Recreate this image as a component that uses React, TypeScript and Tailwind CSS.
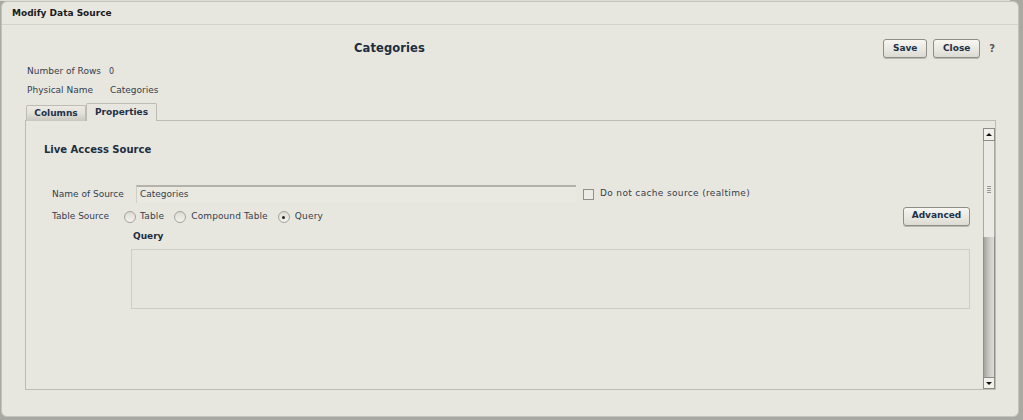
import React from "react";

const font = { fontFamily: '"DejaVu Sans", Verdana, sans-serif' };

function Btn({ children, w }: { children: React.ReactNode; w: string }) {
  return (
    <div
      className={`${w} h-[19px] flex items-center justify-center rounded-[3px] border border-[#8e8d86] bg-gradient-to-b from-[#f7f6f1] to-[#dcdbd3] shadow-[0_1px_0_#b9b8b0] text-[9px] font-bold text-[#1d3148]`}
    >
      {children}
    </div>
  );
}

function Radio({ checked }: { checked?: boolean }) {
  return (
    <div className="w-[12px] h-[12px] rounded-full border border-[#a3a29b] bg-gradient-to-b from-[#dcdbd3] to-[#f3f2ed] flex items-center justify-center">
      {checked && <div className="w-[3px] h-[3px] rounded-full bg-[#222]" />}
    </div>
  );
}

export default function App() {
  return (
    <div className="w-[1023px] h-[420px] bg-[#a9a9a4] overflow-hidden" style={font}>
      <div className="h-[1px] bg-[#dcdcd5] w-[1010px]" />
      <div className="ml-[1px] w-[1018px] h-[416px] bg-[#e8e7df] border border-[#c5c4bc] rounded-[6px] flex flex-col">
        {/* header */}
        <div className="h-[23px] border-b border-[#d3d2ca] flex items-center pl-[10px] pt-[2px] text-[9px] font-bold text-[#1a1a1a]">
          Modify Data Source
        </div>
        {/* main */}
        <div className="pl-[23px] pr-[22px] flex flex-col text-[#33404e]">
          <div className="mt-[14px] h-[19px] flex items-center">
            <div className="ml-[329px] text-[11.5px] font-bold text-[#1c2d40] tracking-[0.1px]">Categories</div>
            <div className="ml-auto flex items-center gap-[6px]">
              <Btn w="w-[44px]">Save</Btn>
              <Btn w="w-[47px]">Close</Btn>
              <div className="ml-[3px] mr-[1px] text-[10px] font-bold text-[#555]">?</div>
            </div>
          </div>
          <div className="mt-[7px] h-[14px] flex items-center pl-[2px] text-[9px]">
            <span className="w-[82px]">Number of Rows</span>
            <span className="text-[8px]">0</span>
          </div>
          <div className="mt-[5px] h-[14px] flex items-center pl-[2px] text-[9px]">
            <span className="w-[83px]">Physical Name</span>
            <span>Categories</span>
          </div>
          {/* tabs */}
          <div className="mt-[6px] h-[17px] flex items-end pl-[1px] relative z-10 -mb-px">
            <div className="w-[60px] h-[16px] border border-[#bdbcb4] border-b-0 rounded-t-[2px] bg-gradient-to-b from-[#eceae3] via-[#e2e1d9] to-[#c9c8c0] flex items-center justify-center text-[9px] font-bold text-[#1d3148]">
              Columns
            </div>
            <div className="w-[71px] h-[18px] border border-[#bdbcb4] border-b-0 rounded-t-[2px] bg-[#e8e7df] flex items-center justify-center text-[9px] font-bold text-[#1d3148]">
              Properties
            </div>
          </div>
          {/* panel */}
          <div className="h-[270px] border border-[#bdbcb4] flex">
            <div className="flex-1 flex flex-col pr-[13px]">
              <div className="mt-[21px] h-[14px] flex items-center pl-[18px] text-[10px] font-bold text-[#1c2d40]">
                Live Access Source
              </div>
              <div className="mt-[29px] h-[18px] flex items-center pl-[26px] text-[9px]">
                <span className="w-[84px] pt-[2px]">Name of Source</span>
                <div className="w-[440px] h-[18px] border-t-2 border-l border-t-[#b3b2aa] border-l-[#d0cfc7] bg-[#e9e8e1] flex items-center pl-[3px]">
                  Categories
                </div>
                <div className="ml-[7px] w-[11px] h-[11px] border border-[#8f8e88] bg-[#ecebe5]" />
                <span className="ml-[6px] tracking-[0.35px]">Do not cache source (realtime)</span>
              </div>
              <div className="mt-[5px] h-[18px] flex items-center pl-[26px] text-[9px]">
                <span className="w-[72px]">Table Source</span>
                <Radio />
                <span className="ml-[4px] tracking-[0.2px]">Table</span>
                <div className="ml-[10px]"><Radio /></div>
                <span className="ml-[5px] tracking-[0.1px]">Compound Table</span>
                <div className="ml-[10px]"><Radio checked /></div>
                <span className="ml-[5px] tracking-[0.2px]">Query</span>
                <div className="ml-auto -mt-[2px]">
                  <Btn w="w-[67px]">Advanced</Btn>
                </div>
              </div>
              <div className="mt-[4px] h-[14px] flex items-center pl-[107px] text-[9px] font-bold text-[#1c2d40]">
                Query
              </div>
              <div className="mt-[5px] ml-[105px] h-[60px] border border-[#cfcec6] bg-[#e7e6de]" />
            </div>
            {/* scrollbar */}
            <div className="w-[12px] pt-[7px] flex flex-col">
              <div className="h-[13px] border border-[#8d8d88] bg-[#f1f0eb] flex items-center justify-center">
                <div className="w-0 h-0 border-l-[3px] border-r-[3px] border-b-[3px] border-l-transparent border-r-transparent border-b-[#111]" />
              </div>
              <div className="h-[96px] border-x border-[#a9a8a2] bg-[#eceae4] flex items-center justify-center">
                <div className="flex flex-col gap-[1px]">
                  <div className="w-[4px] h-[1px] bg-[#9a9a94]" />
                  <div className="w-[4px] h-[1px] bg-[#9a9a94]" />
                  <div className="w-[4px] h-[1px] bg-[#9a9a94]" />
                  <div className="w-[4px] h-[1px] bg-[#9a9a94]" />
                </div>
              </div>
              <div className="flex-1 border-x border-[#8e8e8a] bg-gradient-to-r from-[#a5a5a0] via-[#c9c9c3] to-[#dedcd6]" />
              <div className="h-[12px] border border-[#8d8d88] bg-[#f1f0eb] flex items-center justify-center">
                <div className="w-0 h-0 border-l-[3px] border-r-[3px] border-t-[3px] border-l-transparent border-r-transparent border-t-[#111]" />
              </div>
            </div>
          </div>
        </div>
      </div>
    </div>
  );
}
